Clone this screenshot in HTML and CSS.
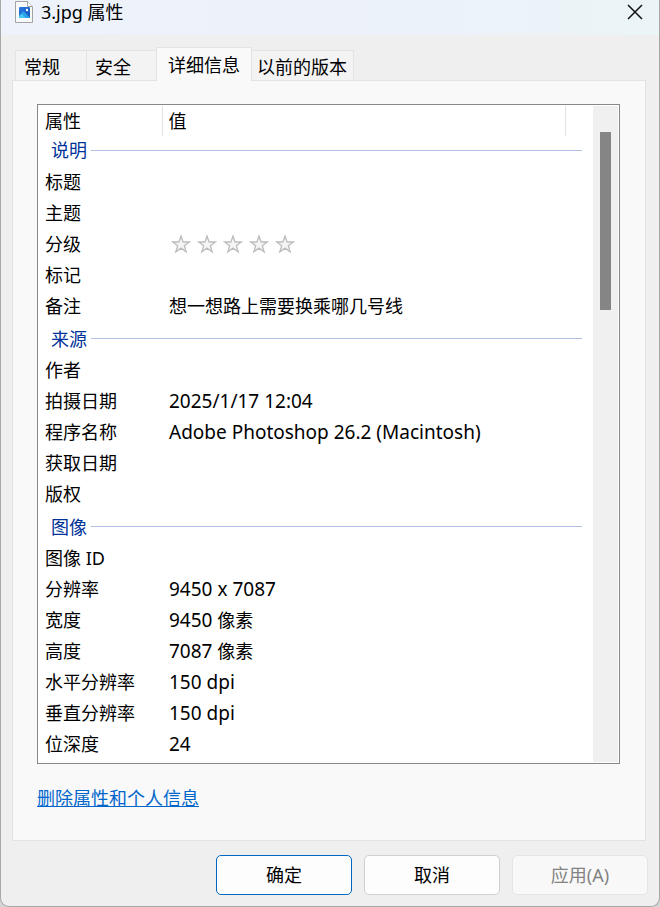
FILE: index.html
```html
<!DOCTYPE html>
<html lang="zh-CN">
<head>
<meta charset="UTF-8">
<meta name="viewport" content="width=device-width, initial-scale=1.0">
<title>3.jpg 属性</title>
<link rel="stylesheet" href="styles.css">
</head>
<body>

<div class="dialog">
  <header class="titlebar">
    <svg class="file-icon" width="18" height="22" viewBox="0 0 18 22">
      <defs>
        <linearGradient id="sky" x1="0" y1="0" x2="1" y2="1">
          <stop offset="0" stop-color="#2a7be0"/>
          <stop offset="1" stop-color="#1654b8"/>
        </linearGradient>
      </defs>
      <path d="M.5 .5H12.500L17.500 5.500V21.500H.5Z" fill="#fafafa" stroke="#a3a3a3"/>
      <path d="M12.500 .5V5.500H17.500" fill="#fff" stroke="#a3a3a3"/>
      <rect x="4" y="6" width="11" height="11" rx="1" fill="url(#sky)"/>
      <path d="M4 15L8.500 10.500L15 17H5Q4 17 4 16Z" fill="#45c6f5"/>
      <path d="M8.500 10.500L15 17H11L6.500 12.500Z" fill="#2ba0ea"/>
      <circle cx="12" cy="9" r="1.200" fill="#fff"/>
    </svg>
    <h1>3.jpg 属性</h1>
    <button class="close" aria-label="关闭">
      <svg width="16" height="16" viewBox="0 0 16 16"><path d="M1 1L15 15M15 1L1 15" stroke="#111" stroke-width="1.500"/></svg>
    </button>
  </header>

  <main>
    <div class="tabs" role="tablist">
      <button class="tab" role="tab">常规</button>
      <button class="tab" role="tab">安全</button>
      <button class="tab active" role="tab" aria-selected="true">详细信息</button>
      <button class="tab" role="tab">以前的版本</button>
    </div>

    <section class="panel">
      <div class="list">
        <table>
          <colgroup><col class="col-name"><col><col class="col-end"></colgroup>
          <thead>
            <tr><th>属性</th><th>值</th><td></td></tr>
          </thead>
          <tbody>
            <tr class="group"><th colspan="3"><div>说明</div></th></tr>
            <tr><td>标题</td><td></td></tr>
            <tr><td>主题</td><td></td></tr>
            <tr>
              <td>分级</td>
              <td>
                <div class="rating">
                  <button aria-label="1 星"><svg viewBox="0 0 20 20"><use href="#star"/></svg></button>
                  <button aria-label="2 星"><svg viewBox="0 0 20 20"><use href="#star"/></svg></button>
                  <button aria-label="3 星"><svg viewBox="0 0 20 20"><use href="#star"/></svg></button>
                  <button aria-label="4 星"><svg viewBox="0 0 20 20"><use href="#star"/></svg></button>
                  <button aria-label="5 星"><svg viewBox="0 0 20 20"><use href="#star"/></svg></button>
                </div>
              </td>
            </tr>
            <tr><td>标记</td><td></td></tr>
            <tr><td>备注</td><td>想一想路上需要换乘哪几号线</td></tr>
          </tbody>
          <tbody>
            <tr class="group"><th colspan="3"><div>来源</div></th></tr>
            <tr><td>作者</td><td></td></tr>
            <tr><td>拍摄日期</td><td><span class="latin">2025/1/17 12:04</span></td></tr>
            <tr><td>程序名称</td><td><span class="latin">Adobe Photoshop 26.2 (Macintosh)</span></td></tr>
            <tr><td>获取日期</td><td></td></tr>
            <tr><td>版权</td><td></td></tr>
          </tbody>
          <tbody>
            <tr class="group"><th colspan="3"><div>图像</div></th></tr>
            <tr><td>图像 ID</td><td></td></tr>
            <tr><td>分辨率</td><td><span class="latin">9450 x 7087</span></td></tr>
            <tr><td>宽度</td><td><span class="latin">9450</span> 像素</td></tr>
            <tr><td>高度</td><td><span class="latin">7087</span> 像素</td></tr>
            <tr><td>水平分辨率</td><td><span class="latin">150 dpi</span></td></tr>
            <tr><td>垂直分辨率</td><td><span class="latin">150 dpi</span></td></tr>
            <tr><td>位深度</td><td><span class="latin">24</span></td></tr>
          </tbody>
        </table>
        <div class="scrollbar"><div class="thumb"></div></div>
      </div>
      <a class="remove" href="#">删除属性和个人信息</a>
    </section>
  </main>

  <footer>
    <button class="btn primary">确定</button>
    <button class="btn">取消</button>
    <button class="btn" disabled>应用(A)</button>
  </footer>
</div>

<svg width="0" height="0" class="defs">
  <symbol id="star" viewBox="0 0 20 20">
    <path d="M10 2L12.100 8H18.300L13.300 11.700L15.200 17.800L10 14.100L4.800 17.800L6.700 11.700L1.700 8H7.900Z" fill="#f6f6f6" stroke="#bdbdbd" stroke-width="1.300"/>
  </symbol>
</svg>

</body>
</html>
```
FILE: styles.css
```css
* {
  box-sizing: border-box;
}

body {
  margin: 0;
  background: #d4d4d4;
  color: #000;
  font-family: "Noto Sans", "Noto Sans CJK SC", sans-serif;
  font-size: 18px;
  line-height: 24px;
}

button {
  font: inherit;
  color: inherit;
  padding: 0;
}

.dialog {
  min-height: 100vh;
  display: flex;
  flex-direction: column;
  background: #efefef;
  border: 1px solid #a8a8a8;
  border-top: 0;
  border-radius: 0 0 9px 9px;
}

.titlebar {
  height: 35px;
  padding: 0 16px 11px 14px;
  display: flex;
  align-items: center;
  background: linear-gradient(90deg, #eef3fb, #ecf2fa 60%, #ebf4f7);
}

.titlebar h1 {
  margin: 0 auto 0 8px;
  font-size: 18px;
  font-weight: 400;
}

.close {
  display: flex;
  border: 0;
  background: none;
}

main {
  flex: 1;
  display: flex;
  flex-direction: column;
  padding: 12px 13px 0 11px;
}

.tabs {
  display: flex;
  align-items: flex-end;
  padding-left: 3px;
}

.tab {
  height: 30px;
  padding: 2px 26px 0 8px;
  background: #f3f3f3;
  border: 1px solid #e3e3e3;
  border-right: 0;
  border-bottom: 0;
}

.tab + .tab {
  padding-right: 25px;
}

.tab:last-child {
  padding: 2px 6px 0 5px;
  border-left: 0;
  border-right: 1px solid #e3e3e3;
}

.tab.active {
  height: 34px;
  margin-bottom: -1px;
  padding: 0 11px;
  background: #f9f9f9;
  border-right: 1px solid #e3e3e3;
  position: relative;
}

.panel {
  flex: 1;
  padding: 23px 25px 30px 24px;
  background: #f9f9f9;
  border: 1px solid #e3e3e3;
}

.list {
  display: flex;
  padding: 1px;
  background: #fff;
  border: 1px solid #85878d;
}

table {
  flex: 1;
  table-layout: fixed;
  border-collapse: collapse;
  margin-bottom: 3px;
}

.col-name {
  width: 123px;
}

.col-end {
  width: 28px;
}

th, td {
  height: 31px;
  padding: 0 6px;
  text-align: left;
  font-weight: 400;
  white-space: nowrap;
}

td + td {
  padding-left: 7px;
}

thead th, thead td {
  height: 30px;
}

thead th {
  border-right: 1px solid #e2e2e2;
}

.group th {
  height: 33px;
  padding: 2px 11px 0 12px;
  color: #003399;
}

thead + tbody .group th {
  height: 30px;
  padding: 0 11px 2px 12px;
}

.group div {
  display: flex;
  align-items: center;
  gap: 4px;
}

.group div::after {
  content: "";
  flex: 1;
  height: 1px;
  background: #b0bfe3;
}

.latin {
  font-size: 19px;
}

.rating {
  display: flex;
}

.rating button {
  width: 26px;
  height: 20px;
  border: 0;
  background: none;
}

.rating svg {
  display: block;
  width: 20px;
  height: 20px;
  margin: 0 auto 0 2px;
}

.scrollbar {
  width: 25px;
  padding: 26px 7px;
  background: #f0f0f0;
}

.thumb {
  height: 178px;
  background: #858585;
}

.remove {
  display: inline-block;
  margin-top: 22px;
  color: #0066cc;
}

footer {
  display: flex;
  justify-content: flex-end;
  gap: 12px;
  padding: 14px 11px 11px;
}

.btn {
  width: 136px;
  height: 40px;
  background: #fdfdfd;
  border: 1px solid #d0d0d0;
  border-radius: 5px;
}

.btn.primary {
  border-color: #0067c0;
}

.btn:disabled {
  background: #f8f8f8;
  border-color: #e5e5e5;
  color: #838383;
}

.defs {
  position: absolute;
}
```
